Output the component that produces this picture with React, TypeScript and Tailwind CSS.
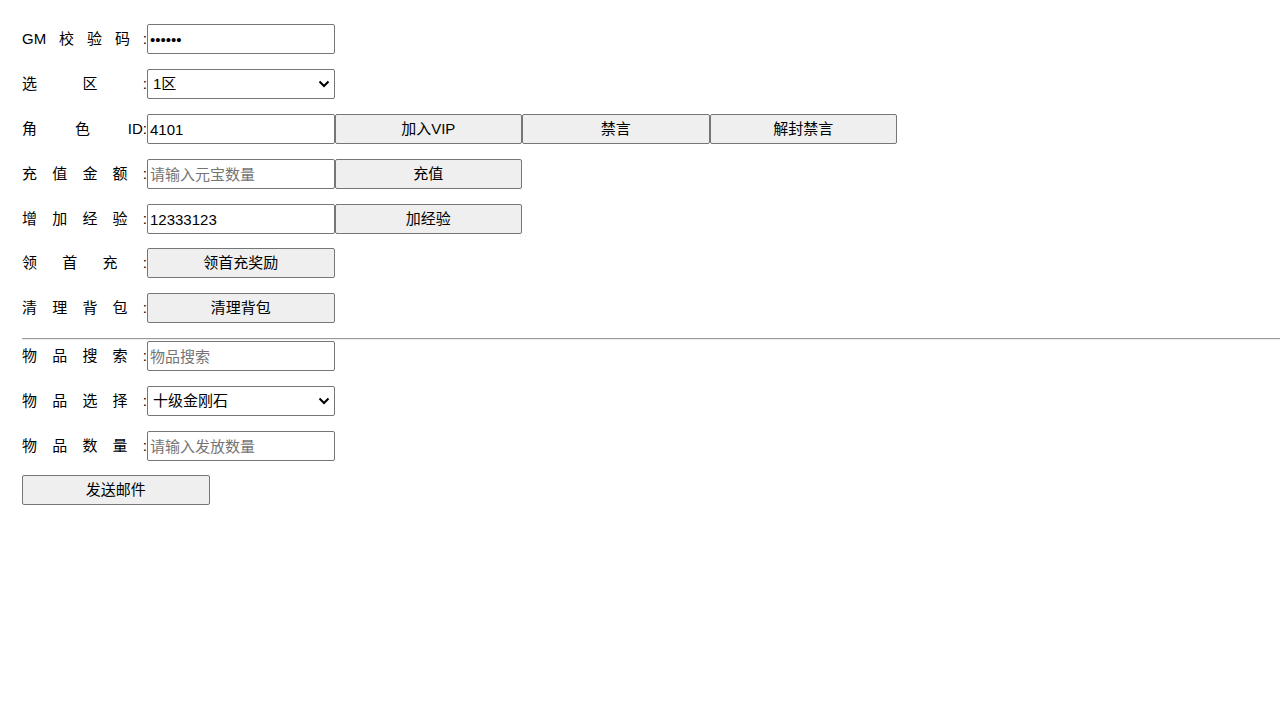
import { useState } from 'react';

const Label = ({ parts }: { parts: string[] }) => (
  <div className="flex w-[125px] shrink-0 justify-between text-[15px] text-black">
    {parts.map((p, i) => (
      <span key={i}>{p}</span>
    ))}
  </div>
);

const inputCls =
  'h-[30px] w-[187.5px] shrink-0 rounded-[2px] border border-[#767676] bg-white px-[2px] text-[15px] text-black placeholder:text-[#757575] outline-none';
const btnCls =
  'h-[30px] w-[187.5px] shrink-0 rounded-[2px] border border-[#767676] bg-[#efefef] text-[15px] text-black';

const Select = ({ options }: { options: string[] }) => (
  <div className="relative h-[30px] w-[187.5px] shrink-0">
    <select className="h-[30px] w-full appearance-none rounded-[2px] border border-[#767676] bg-white pl-[5px] pr-[20px] text-[15px] text-black outline-none">
      {options.map(o => (
        <option key={o}>{o}</option>
      ))}
    </select>
    <svg
      className="pointer-events-none absolute right-[5px] top-[11px]"
      width="12"
      height="8"
      viewBox="0 0 12 8"
      fill="none"
    >
      <path d="M1.5 1.5 L6 6 L10.5 1.5" stroke="#000" strokeWidth="2" />
    </svg>
  </div>
);

const App = () => {
  const [roleId, setRoleId] = useState('4101');
  const [exp, setExp] = useState('12333123');

  return (
    <div className="min-h-[720px] bg-white pl-[22px] pt-[24px] font-['Liberation_Sans','Noto_Sans_CJK_SC',sans-serif]">
      <div className="flex h-[30px] items-center">
        <Label parts={['GM', '校', '验', '码', ':']} />
        <input type="password" defaultValue="123456" className={inputCls} />
      </div>

      <div className="mt-[15px] flex h-[30px] items-center">
        <Label parts={['选', '区', ':']} />
        <Select options={['1区', '2区']} />
      </div>

      <div className="mt-[15px] flex h-[30px] items-center">
        <Label parts={['角', '色', 'ID:']} />
        <input value={roleId} onChange={e => setRoleId(e.target.value)} className={inputCls} />
        <button className={btnCls}>加入VIP</button>
        <button className={btnCls}>禁言</button>
        <button className={btnCls}>解封禁言</button>
      </div>

      <div className="mt-[15px] flex h-[30px] items-center">
        <Label parts={['充', '值', '金', '额', ':']} />
        <input placeholder="请输入元宝数量" className={inputCls} />
        <button className={btnCls}>充值</button>
      </div>

      <div className="mt-[15px] flex h-[30px] items-center">
        <Label parts={['增', '加', '经', '验', ':']} />
        <input value={exp} onChange={e => setExp(e.target.value)} className={inputCls} />
        <button className={btnCls}>加经验</button>
      </div>

      <div className="mt-[14px] flex h-[30px] items-center">
        <Label parts={['领', '首', '充', ':']} />
        <button className={btnCls}>领首充奖励</button>
      </div>

      <div className="mt-[15px] flex h-[30px] items-center">
        <Label parts={['清', '理', '背', '包', ':']} />
        <button className={btnCls}>清理背包</button>
      </div>

      <hr className="mt-[15px] border-0 border-t border-b border-t-[#9a9a9a] border-b-[#eeeeee]" />

      <div className="mt-[1px] flex h-[30px] items-center">
        <Label parts={['物', '品', '搜', '索', ':']} />
        <input placeholder="物品搜索" className={inputCls} />
      </div>

      <div className="mt-[15px] flex h-[30px] items-center">
        <Label parts={['物', '品', '选', '择', ':']} />
        <Select options={['十级金刚石']} />
      </div>

      <div className="mt-[15px] flex h-[30px] items-center">
        <Label parts={['物', '品', '数', '量', ':']} />
        <input placeholder="请输入发放数量" className={inputCls} />
      </div>

      <div className="mt-[14px]">
        <button className={btnCls}>发送邮件</button>
      </div>
    </div>
  );
};

export default App;
